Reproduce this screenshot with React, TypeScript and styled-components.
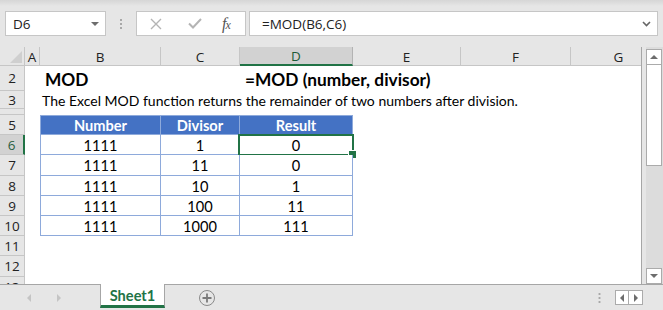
import React from "react";
import styled, { createGlobalStyle } from "styled-components";

const Global = createGlobalStyle`
  html, body { margin: 0; padding: 0; overflow: hidden; background: #fff; }
  * { box-sizing: border-box; }
`;

const GREEN = "#217346";
const BLUE = "#4472c4";
const TBORDER = "#8eaadb";

const Frame = styled.div`
  width: 663px;
  height: 310px;
  display: flex;
  flex-direction: column;
  background: #e6e6e6;
  font-family: "Lato", "Liberation Sans", sans-serif;
`;

const TopBar = styled.div`
  height: 47px;
  flex: none;
  display: flex;
  align-items: flex-start;
  padding: 11px 5px 0 5px;
  background: linear-gradient(#d6d6d6, #e6e6e6 6px);
`;

const NameBox = styled.div`
  width: 101px;
  height: 25px;
  border: 1px solid #c6c6c6;
  background: #fff;
  display: flex;
  align-items: center;
  justify-content: space-between;
  padding: 0 6px 0 7px;
  font-family: "Open Sans", sans-serif;
  font-size: 13.5px;
  color: #222;
`;

const Caret = styled.span`
  width: 0;
  height: 0;
  border-left: 4px solid transparent;
  border-right: 4px solid transparent;
  border-top: 4px solid #6d6d6d;
`;

const Grip = styled.div`
  width: 2px;
  height: 12px;
  margin: 7px 14px 0 14px;
  background-image: radial-gradient(circle, #a8a8a8 0.9px, transparent 1px);
  background-size: 2px 4px;
`;

const FxButtons = styled.div`
  width: 110px;
  height: 25px;
  border: 1px solid #c6c6c6;
  background: #fff;
  display: flex;
  align-items: center;
  padding: 0 0 0 13px;
  gap: 20px;
`;

const FxLabel = styled.span`
  font-family: "Liberation Serif", serif;
  font-style: italic;
  font-size: 16px;
  color: #555;
  margin-left: 0px;
  letter-spacing: -1px;
`;

const FxSub = styled.span`
  font-size: 12px;
`;

const FormulaInput = styled.div`
  margin-left: 3px;
  flex: 1;
  height: 25px;
  border: 1px solid #c6c6c6;
  background: #fff;
  display: flex;
  align-items: center;
  justify-content: space-between;
  padding: 0 6px 0 12px;
  font-family: "Open Sans", sans-serif;
  font-size: 13.5px;
  color: #222;
`;

const SheetArea = styled.div`
  height: 237px;
  flex: none;
  display: flex;
  gap: 4px;
`;

const Grid = styled.div`
  width: 642px;
  height: 237px;
  background: #fff;
  border-right: 1px solid #a6a6a6;
  overflow: hidden;
  display: flex;
  flex-direction: column;
`;

const Row = styled.div<{ $h: number }>`
  height: ${(p) => p.$h}px;
  flex: none;
  display: flex;
`;

const Corner = styled.div`
  width: 25px;
  flex: none;
  background: #e6e6e6;
  border-right: 1px solid #c6c6c6;
  border-bottom: 1px solid #c6c6c6;
  position: relative;
  &::after {
    content: "";
    position: absolute;
    right: 2px;
    bottom: 2px;
    width: 0;
    height: 0;
    border-left: 12px solid transparent;
    border-bottom: 12px solid #cfcfcf;
  }
`;

const ColHead = styled.div<{ $w: number; $sel?: boolean }>`
  width: ${(p) => p.$w}px;
  flex: none;
  background: ${(p) => (p.$sel ? "#d2d2d2" : "#e6e6e6")};
  border-right: 1px solid ${(p) => (p.$sel ? "#b3b3b3" : "#c6c6c6")};
  border-bottom: ${(p) => (p.$sel ? `2px solid ${GREEN}` : "1px solid #c6c6c6")};
  display: flex;
  align-items: center;
  justify-content: center;
  font-family: "Open Sans", sans-serif;
  font-size: 13.5px;
  color: ${(p) => (p.$sel ? "#1d5b38" : "#222")};
  padding-top: 1px;
`;

const RowHead = styled.div<{ $sel?: boolean }>`
  width: 25px;
  flex: none;
  background: ${(p) => (p.$sel ? "#d2d2d2" : "#e6e6e6")};
  border-bottom: 1px solid #c6c6c6;
  border-right: ${(p) => (p.$sel ? `2px solid ${GREEN}` : "1px solid #c6c6c6")};
  display: flex;
  align-items: center;
  justify-content: center;
  font-family: "Open Sans", sans-serif;
  font-size: 13.5px;
  color: ${(p) => (p.$sel ? "#2a5e40" : "#222")};
  overflow: hidden;
`;

const Cell = styled.div<{ $w: number }>`
  width: ${(p) => p.$w}px;
  flex: none;
  white-space: nowrap;
  overflow: visible;
  font-size: 14px;
  color: #000;
  display: flex;
  align-items: center;
`;

const TitleText = styled.span`
  font-weight: 700;
  font-size: 17.3px;
  padding-left: 5px;
  padding-top: 2px;
`;

const DescText = styled.span`
  font-size: 14px;
  padding-left: 2px;
`;

const TCell = styled.div<{ $w: number; $first?: boolean; $head?: boolean }>`
  width: ${(p) => p.$w}px;
  flex: none;
  position: relative;
  display: flex;
  align-items: center;
  justify-content: center;
  font-size: 14.6px;
  border-right: 1px solid ${TBORDER};
  border-bottom: 1px solid ${TBORDER};
  border-left: ${(p) => (p.$first ? `1px solid ${TBORDER}` : "none")};
  border-top: ${(p) => (p.$head ? `1px solid ${TBORDER}` : "none")};
  background: ${(p) => (p.$head ? BLUE : "#fff")};
  color: ${(p) => (p.$head ? "#fff" : "#000")};
  font-weight: ${(p) => (p.$head ? 700 : 400)};
  padding-top: 1px;
`;

const Selection = styled.div`
  position: absolute;
  left: -2px;
  top: -1px;
  right: -2px;
  bottom: -2px;
  border: 2px solid ${GREEN};
  pointer-events: none;
  &::after {
    content: "";
    position: absolute;
    right: -5px;
    bottom: -5px;
    width: 7px;
    height: 7px;
    background: ${GREEN};
    border: 1px solid #fff;
  }
`;

const VScroll = styled.div`
  width: 17px;
  flex: none;
  height: 237px;
  display: flex;
  flex-direction: column;
  padding-top: 2px;
  background: #dcdcdc;
`;

const ScrollBtn = styled.div`
  width: 16px;
  height: 16px;
  flex: none;
  background: #fff;
  border: 1px solid #ababab;
  display: flex;
  align-items: center;
  justify-content: center;
`;

const Thumb = styled.div`
  width: 16px;
  height: 101px;
  flex: none;
  background: #fff;
  border: 1px solid #ababab;
  border-top: none;
`;

const Track = styled.div`
  flex: 1;
`;

const Tri = styled.span<{ $dir: "up" | "down" | "left" | "right"; $c?: string; $s?: number }>`
  width: 0;
  height: 0;
  ${(p) => {
    const s = p.$s ?? 4;
    const c = p.$c ?? "#6d6d6d";
    if (p.$dir === "up")
      return `border-left:${s}px solid transparent;border-right:${s}px solid transparent;border-bottom:${s}px solid ${c};`;
    if (p.$dir === "down")
      return `border-left:${s}px solid transparent;border-right:${s}px solid transparent;border-top:${s}px solid ${c};`;
    if (p.$dir === "left")
      return `border-top:${s}px solid transparent;border-bottom:${s}px solid transparent;border-right:${s}px solid ${c};`;
    return `border-top:${s}px solid transparent;border-bottom:${s}px solid transparent;border-left:${s}px solid ${c};`;
  }}
`;

const TabBar = styled.div`
  flex: 1;
  display: flex;
  align-items: stretch;
  background: #e6e6e6;
`;

const TabNav = styled.div`
  width: 100px;
  border-top: 1px solid #a6a6a6;
  display: flex;
  align-items: center;
  padding-left: 27px;
  gap: 26px;
`;

const Tab = styled.div`
  width: 65px;
  background: #fff;
  border-left: 1px solid #a6a6a6;
  border-right: 1px solid #a6a6a6;
  border-bottom: 3px solid ${GREEN};
  margin-bottom: 2px;
  display: flex;
  align-items: center;
  justify-content: center;
  font-weight: 700;
  font-size: 14.6px;
  color: ${GREEN};
  padding-top: 1px;
`;

const TabRest = styled.div`
  flex: 1;
  border-top: 1px solid #a6a6a6;
  display: flex;
  align-items: center;
  padding-left: 34px;
`;

const AddBtn = styled.div`
  width: 16px;
  height: 16px;
  border-radius: 50%;
  border: 1.5px solid #8a8a8a;
  display: flex;
  align-items: center;
  justify-content: center;
  color: #7a7a7a;
  margin-top: 1px;
`;

const HGrip = styled.div`
  width: 3px;
  height: 11px;
  margin-left: auto;
  margin-right: 14px;
  background-image: radial-gradient(circle, #a8a8a8 1px, transparent 1.2px);
  background-size: 3px 4px;
`;

const HScrollGroup = styled.div`
  display: flex;
  margin-right: 20px;
`;

const HBtn = styled.div`
  width: 14px;
  height: 15px;
  background: #fff;
  border: 1px solid #ababab;
  display: flex;
  align-items: center;
  justify-content: center;
  & + & {
    border-left: none;
  }
`;

const COLS = [
  { k: "A", w: 15 },
  { k: "B", w: 121 },
  { k: "C", w: 79 },
  { k: "D", w: 113 },
  { k: "E", w: 108 },
  { k: "F", w: 110 },
  { k: "G", w: 96 },
];
const W = (k: string) => COLS.find((c) => c.k === k)!.w;

const data = [
  [1111, 1, 0],
  [1111, 11, 0],
  [1111, 10, 1],
  [1111, 100, 11],
  [1111, 1000, 111],
];
const dataHeights = [20, 21, 20, 20, 20];

const RestCells = ({ from }: { from: number }) => (
  <>
    {COLS.slice(from).map((c) => (
      <Cell key={c.k} $w={c.w} />
    ))}
  </>
);

export default function App() {
  return (
    <Frame>
      <Global />
      <TopBar>
        <NameBox>
          <span>D6</span>
          <Caret />
        </NameBox>
        <Grip />
        <FxButtons>
          <svg width="12" height="12" viewBox="0 0 12 12">
            <path d="M1 1 L11 11 M11 1 L1 11" stroke="#b4b4b4" strokeWidth="1.4" fill="none" />
          </svg>
          <svg width="14" height="11" viewBox="0 0 14 11" style={{ marginLeft: 6 }}>
            <path d="M1 5.5 L5 9.5 L13 1" stroke="#b4b4b4" strokeWidth="2" fill="none" />
          </svg>
          <FxLabel>
            f<FxSub>x</FxSub>
          </FxLabel>
        </FxButtons>
        <FormulaInput>
          <span>=MOD(B6,C6)</span>
          <svg width="9" height="6" viewBox="0 0 9 6">
            <path d="M1 1 L4.5 4.5 L8 1" stroke="#666" strokeWidth="1.6" fill="none" />
          </svg>
        </FormulaInput>
      </TopBar>

      <SheetArea>
        <Grid>
          <Row $h={19}>
            <Corner />
            {COLS.map((c) => (
              <ColHead key={c.k} $w={c.w} $sel={c.k === "D"}>
                {c.k}
              </ColHead>
            ))}
          </Row>
          <Row $h={25}>
            <RowHead>2</RowHead>
            <Cell $w={W("A")} />
            <Cell $w={W("B")}>
              <TitleText>MOD</TitleText>
            </Cell>
            <Cell $w={W("C")} />
            <Cell $w={W("D")}>
              <TitleText>=MOD (number, divisor)</TitleText>
            </Cell>
            <RestCells from={4} />
          </Row>
          <Row $h={18}>
            <RowHead>3</RowHead>
            <Cell $w={W("A")} />
            <Cell $w={W("B")}>
              <DescText>
                The Excel MOD function returns the remainder of two numbers after division.
              </DescText>
            </Cell>
          </Row>
          <Row $h={6}>
            <RowHead />
          </Row>
          <Row $h={20}>
            <RowHead>5</RowHead>
            <Cell $w={W("A")} />
            <TCell $w={W("B")} $first $head>
              Number
            </TCell>
            <TCell $w={W("C")} $head>
              Divisor
            </TCell>
            <TCell $w={W("D")} $head>
              Result
            </TCell>
          </Row>
          {data.map((r, i) => (
            <Row key={i} $h={dataHeights[i]}>
              <RowHead $sel={i === 0}>{6 + i}</RowHead>
              <Cell $w={W("A")} />
              <TCell $w={W("B")} $first>
                {r[0]}
              </TCell>
              <TCell $w={W("C")}>{r[1]}</TCell>
              <TCell $w={W("D")}>
                {r[2]}
                {i === 0 && <Selection />}
              </TCell>
            </Row>
          ))}
          <Row $h={20}>
            <RowHead>11</RowHead>
          </Row>
          <Row $h={21}>
            <RowHead>12</RowHead>
          </Row>
          <Row $h={20}>
            <RowHead>13</RowHead>
          </Row>
        </Grid>
        <VScroll>
          <ScrollBtn>
            <Tri $dir="up" />
          </ScrollBtn>
          <Thumb />
          <Track />
          <ScrollBtn>
            <Tri $dir="down" />
          </ScrollBtn>
        </VScroll>
      </SheetArea>

      <TabBar>
        <TabNav>
          <Tri $dir="left" $c="#c4c4c4" />
          <Tri $dir="right" $c="#c4c4c4" />
        </TabNav>
        <Tab>Sheet1</Tab>
        <TabRest>
          <AddBtn>
            <svg width="10" height="10" viewBox="0 0 10 10">
              <path d="M5 0.5 V9.5 M0.5 5 H9.5" stroke="#7a7a7a" strokeWidth="1.8" />
            </svg>
          </AddBtn>
          <HGrip />
          <HScrollGroup>
            <HBtn>
              <Tri $dir="left" $s={4} />
            </HBtn>
            <HBtn>
              <Tri $dir="right" $s={4} />
            </HBtn>
          </HScrollGroup>
        </TabRest>
      </TabBar>
    </Frame>
  );
}
